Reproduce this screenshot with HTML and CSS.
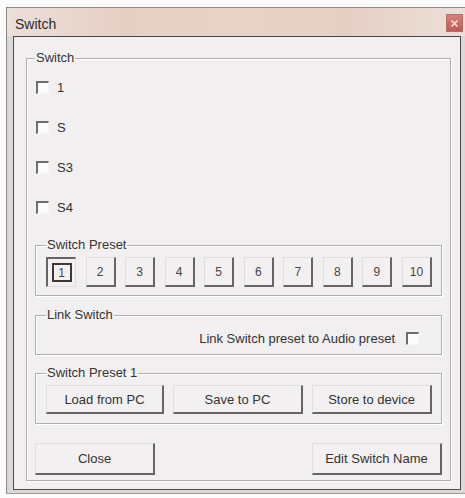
FILE: index.html
```html
<!DOCTYPE html>
<html lang="en">
<head>
    <meta charset="UTF-8">
    <meta name="viewport" content="width=device-width, initial-scale=1.0">
    <title>Switch</title>
    <link rel="stylesheet" href="styles.css">
</head>
<body>
    <div class="window">
        <div class="titlebar">
            <span class="title">Switch</span>
            <span class="close-x">
                <svg width="9" height="9" viewBox="0 0 9 9"><path d="M1.5 1.5 L7.5 7.5 M7.5 1.5 L1.5 7.5" stroke="#f6e6e4" stroke-width="1.6"/></svg>
            </span>
        </div>

        <div class="client">
            <fieldset class="group main">
                <legend>Switch</legend>

                <label class="check-row"><span class="checkbox"></span>1</label>
                <label class="check-row"><span class="checkbox"></span>S</label>
                <label class="check-row"><span class="checkbox"></span>S3</label>
                <label class="check-row"><span class="checkbox"></span>S4</label>

                <fieldset class="group presets">
                    <legend>Switch Preset</legend>
                    <div class="preset-row">
                        <button class="btn preset active"><span class="focus">1</span></button>
                        <button class="btn preset">2</button>
                        <button class="btn preset">3</button>
                        <button class="btn preset">4</button>
                        <button class="btn preset">5</button>
                        <button class="btn preset">6</button>
                        <button class="btn preset">7</button>
                        <button class="btn preset">8</button>
                        <button class="btn preset">9</button>
                        <button class="btn preset">10</button>
                    </div>
                </fieldset>

                <fieldset class="group link">
                    <legend>Link Switch</legend>
                    <label class="link-row">Link Switch preset to Audio preset <span class="checkbox"></span></label>
                </fieldset>

                <fieldset class="group actions">
                    <legend>Switch Preset 1</legend>
                    <div class="action-row">
                        <button class="btn load">Load from PC</button>
                        <button class="btn save">Save to PC</button>
                        <button class="btn store">Store to device</button>
                    </div>
                </fieldset>

                <div class="footer-row">
                    <button class="btn close">Close</button>
                    <button class="btn rename">Edit Switch Name</button>
                </div>
            </fieldset>
        </div>
    </div>
</body>
</html>
```

FILE: styles.css
```css
body {
    margin: 0;
    background-color: #fbfbfb;
    font-family: "Liberation Sans", Arial, sans-serif;
    font-size: 13px;
    color: #333;
}

.window {
    box-sizing: border-box;
    width: 459px;
    margin: 7px 0 0 6px;
    padding-bottom: 3px;
    border: 1px solid #8c8888;
    border-right: none;
    border-bottom-color: #a09c9a;
    background-color: #dcd8d6;
}

.titlebar {
    display: flex;
    align-items: flex-start;
    height: 28px;
    background: linear-gradient(90deg, #ebdfd8 0%, #e6d0c5 25%, #e9d3c9 50%, #e5d0c6 75%, #ecdfd8 100%);
}

.title {
    padding: 8px 0 0 8px;
    font-size: 14px;
    line-height: 16px;
    color: #2a2a2a;
}

.close-x {
    display: flex;
    justify-content: center;
    align-items: center;
    width: 17px;
    height: 18px;
    margin: 6px 2px 0 auto;
    background: linear-gradient(180deg, #d7827a, #c25850);
    border: 1px solid #b07068;
    box-sizing: border-box;
}

.client {
    width: 448px;
    box-sizing: border-box;
    margin-left: 6px;
    padding: 13px 9px 8px 12px;
    border: 1px solid #4a4848;
    background-color: #f1efef;
}

.group {
    margin: 0;
    border: 1px solid #b2aeae;
    box-shadow: inset 1px 1px 0 #fff, 1px 1px 0 #fff;
    min-inline-size: 0;
}

.group legend {
    padding: 0 1px;
    line-height: 16px;
    color: #333;
}

.main {
    padding: 1px 8px 5px 8px;
}

.check-row {
    display: flex;
    align-items: center;
    gap: 8px;
    height: 40px;
    padding-left: 1px;
}

.checkbox {
    box-sizing: border-box;
    width: 13px;
    height: 13px;
    background-color: #fbfbfb;
    border-top: 2px solid #6e6c6c;
    border-left: 2px solid #6e6c6c;
    border-right: 1px solid #f6f6f6;
    border-bottom: 1px solid #f6f6f6;
}

.presets {
    margin-top: 10px;
    padding: 4px 9px 8px 10px;
}

.preset-row {
    display: flex;
    justify-content: space-between;
}

.btn {
    box-sizing: border-box;
    padding: 0;
    font-family: inherit;
    font-size: 13px;
    color: #333;
    background-color: #f2f0f0;
    border-top: 1px solid #e0dede;
    border-left: 1px solid #e0dede;
    border-right: 2px solid #666464;
    border-bottom: 2px solid #666464;
}

.preset {
    width: 30px;
    height: 30px;
    font-size: 12px;
    color: #444;
}

.preset.active {
    display: flex;
    justify-content: center;
    align-items: center;
    border-top: 2px solid #666464;
    border-left: 2px solid #666464;
    border-right: 1px solid #e0dede;
    border-bottom: 1px solid #e0dede;
}

.focus {
    display: flex;
    justify-content: center;
    align-items: center;
    width: 20px;
    height: 19px;
    box-sizing: border-box;
    border: 2px solid #3a3838;
}

.link {
    margin-top: 11px;
    padding: 0 22px 0 10px;
}

.link-row {
    display: flex;
    justify-content: flex-end;
    align-items: center;
    gap: 11px;
    height: 31px;
}

.actions {
    margin-top: 10px;
    padding: 4px 9px 9px 10px;
}

.action-row {
    display: flex;
    justify-content: space-between;
}

.action-row .btn {
    height: 29px;
}

.load {
    width: 118px;
}

.save {
    width: 130px;
}

.store {
    width: 120px;
}

.footer-row {
    display: flex;
    justify-content: space-between;
    margin-top: 19px;
}

.footer-row .btn {
    height: 32px;
}

.close {
    width: 120px;
}

.rename {
    width: 130px;
}
```
